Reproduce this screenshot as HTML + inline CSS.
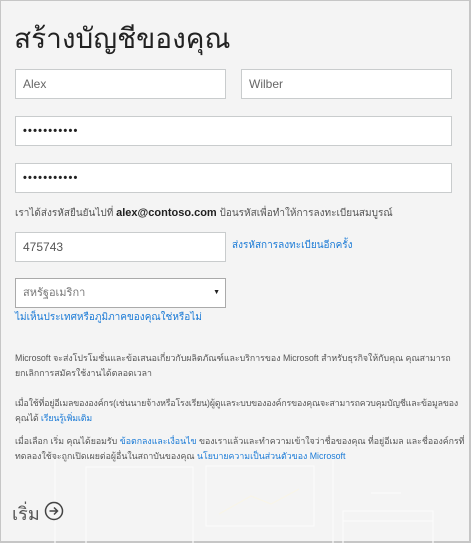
<!DOCTYPE html>
<html><head><meta charset="utf-8"><style>
*{box-sizing:border-box;margin:0;padding:0}
html,body{width:471px;height:543px;overflow:hidden}
body{background:#f4f4f4;border:1px solid #c6c6c6;border-right:2px solid #c6c6c6;border-bottom:2px solid #c6c6c6;position:relative;font-family:"Liberation Sans",sans-serif;color:#444}
.a{position:absolute}
.in{position:absolute;background:#fff;border:1px solid #c9cccd;height:30px;font-size:12px;color:#666;padding-left:7px;line-height:28px}
.dots{color:#222;font-size:11px;font-weight:bold;letter-spacing:1.2px;line-height:28px}
.lk{color:#1a7ad6}
p{position:absolute;left:14px;font-size:8.8px;line-height:15px;color:#555;white-space:nowrap}
</style></head><body>
<svg class="a" style="left:50px;top:440px" width="420" height="103" fill="none" stroke="#fbfbfb" stroke-width="1.2">
<rect x="4" y="14" width="278" height="100"/><rect x="35" y="26" width="107" height="90"/><rect x="155" y="25" width="108" height="60"/>
<polyline points="168,73 200,55 220,63 248,48" stroke="#f8f5e8"/>
<rect x="292" y="70" width="90" height="40"/><line x1="292" y1="80" x2="382" y2="80"/><line x1="320" y1="52" x2="350" y2="52"/>
</svg>
<div class="a" style="left:13px;top:16px;font-size:28px;color:#222;font-weight:300">สร้างบัญชีของคุณ</div>
<div class="in" style="left:14px;top:68px;width:211px">Alex</div>
<div class="in" style="left:240px;top:68px;width:211px">Wilber</div>
<div class="in dots" style="left:14px;top:115px;width:437px">•••••••••••</div>
<div class="in dots" style="left:14px;top:162px;width:437px">•••••••••••</div>
<div class="a" style="left:14px;top:205px;font-size:10px;color:#555">เราได้ส่งรหัสยืนยันไปที่ <b style="color:#222;font-size:11px">alex@contoso.com</b> ป้อนรหัสเพื่อทำให้การลงทะเบียนสมบูรณ์</div>
<div class="in" style="left:14px;top:231px;width:211px;font-size:12px;color:#555">475743</div>
<div class="a lk" style="left:231px;top:237px;font-size:10px">ส่งรหัสการลงทะเบียนอีกครั้ง</div>
<div class="in" style="left:14px;top:277px;width:211px;border-color:#aaa;font-size:11px;color:#777">สหรัฐอเมริกา<span style="position:absolute;right:5px;top:0;font-size:7px;color:#222">▼</span></div>
<div class="a lk" style="left:14px;top:309px;font-size:10px">ไม่เห็นประเทศหรือภูมิภาคของคุณใช่หรือไม่</div>
<p style="top:350px">Microsoft จะส่งโปรโมชั่นและข้อเสนอเกี่ยวกับผลิตภัณฑ์และบริการของ Microsoft สำหรับธุรกิจให้กับคุณ คุณสามารถ<br>ยกเลิกการสมัครใช้งานได้ตลอดเวลา</p>
<p style="top:395px;letter-spacing:-0.15px">เมื่อใช้ที่อยู่อีเมลขององค์กร(เช่นนายจ้างหรือโรงเรียน)ผู้ดูแลระบบขององค์กรของคุณจะสามารถควบคุมบัญชีและข้อมูลของ<br>คุณได้ <span class="lk">เรียนรู้เพิ่มเติม</span></p>
<p style="top:433px">เมื่อเลือก เริ่ม คุณได้ยอมรับ <span class="lk">ข้อตกลงและเงื่อนไข</span> ของเราแล้วและทำความเข้าใจว่าชื่อของคุณ ที่อยู่อีเมล และชื่อองค์กรที่<br>ทดลองใช้จะถูกเปิดเผยต่อผู้อื่นในสถาบันของคุณ <span class="lk">นโยบายความเป็นส่วนตัวของ Microsoft</span></p>
<div class="a" style="left:11px;top:498px;font-size:18px;color:#555">เริ่ม</div>
<svg class="a" style="left:43px;top:500px" width="20" height="20" viewBox="0 0 20 20" fill="none" stroke="#444" stroke-width="1.5"><circle cx="10" cy="10" r="8.5"/><path d="M5.5 10h8M10 6.5l3.5 3.5-3.5 3.5"/></svg>
</body></html>
